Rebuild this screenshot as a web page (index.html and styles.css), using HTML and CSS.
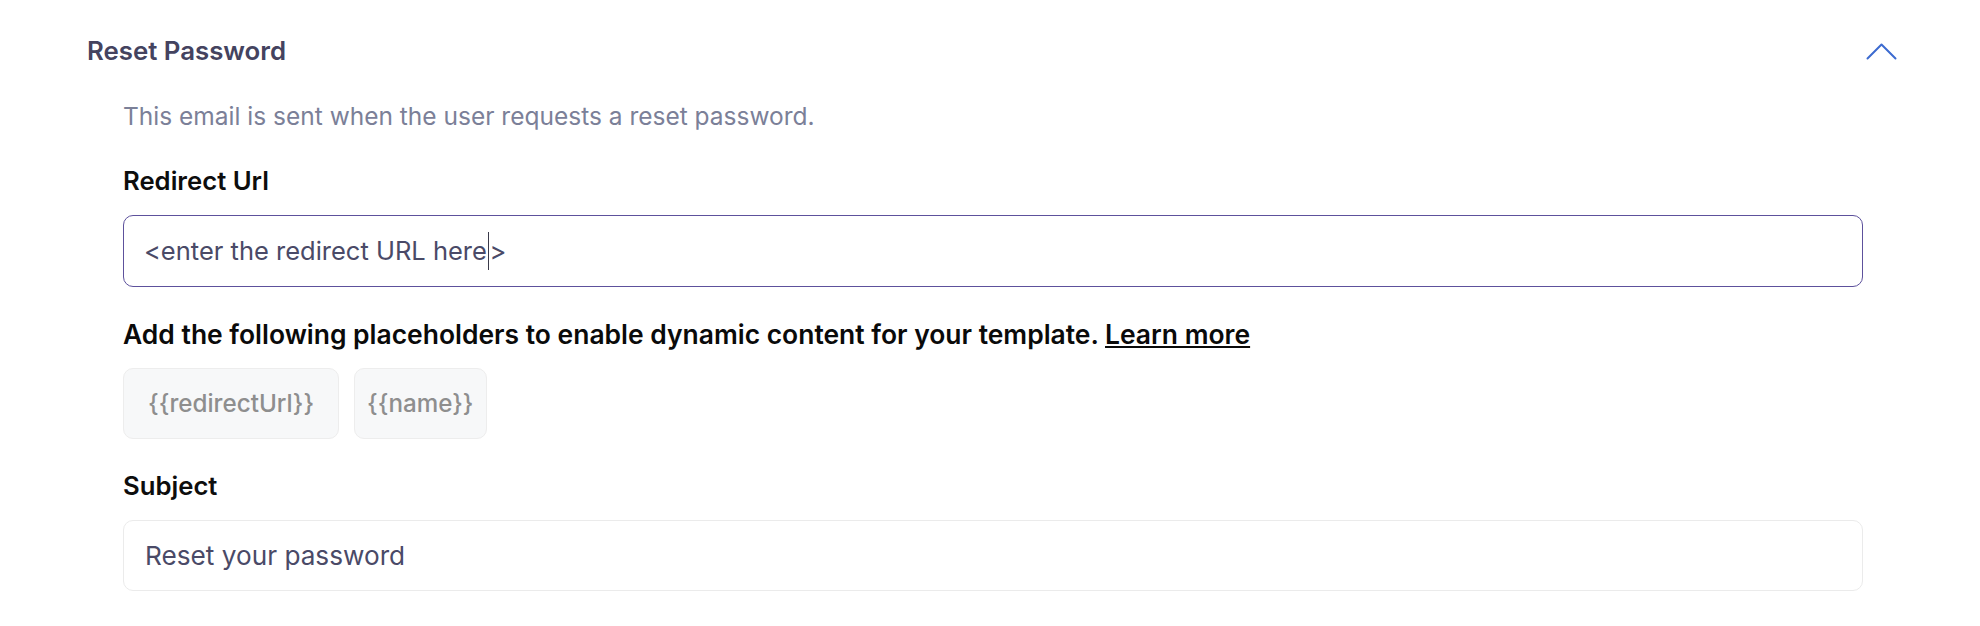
FILE: index.html
```html
<!DOCTYPE html>
<html lang="en">
<head>
<meta charset="utf-8">
<title>Reset Password</title>
<link rel="stylesheet" href="styles.css">
</head>
<body>
<section class="panel">
  <div class="panel-header">
    <h2 class="panel-title">Reset Password</h2>
    <svg class="chevron" width="31" height="17" viewBox="0 0 31 17" aria-hidden="true">
      <polyline points="1.5,15.5 15.5,1.5 29.5,15.5" fill="none" stroke="#3d6bd0" stroke-width="2" stroke-linecap="round" stroke-linejoin="round"/>
    </svg>
  </div>
  <div class="panel-body">
    <p class="desc">This email is sent when the user requests a reset password.</p>

    <div class="field">
      <div class="label">Redirect Url</div>
      <div class="input input-focused">&lt;enter the redirect URL here<span class="caret"></span>&gt;</div>
    </div>

    <div class="field">
      <div class="hint">Add the following placeholders to enable dynamic content for your template. <a class="link" href="#">Learn more</a></div>
      <div class="chips">
        <span class="chip chip-wide">{{redirectUrl}}</span>
        <span class="chip">{{name}}</span>
      </div>
    </div>

    <div class="field">
      <div class="label">Subject</div>
      <div class="input">Reset your password</div>
    </div>
  </div>
</section>
</body>
</html>
```
FILE: styles.css
```css
* { box-sizing: border-box; }

html, body {
  margin: 0;
  padding: 0;
  background: #ffffff;
}

body {
  font-family: "Inter", "Noto Sans", sans-serif;
  color: #111111;
}

.panel {
  padding: 33px 84px 0 87px;
}

.panel-header {
  display: flex;
  align-items: center;
  justify-content: space-between;
  height: 36px;
}

.panel-title {
  margin: 0;
  font-size: 25.8px;
  font-weight: 600;
  line-height: 36px;
  color: #44435f;
}

.chevron {
  display: block;
  margin-right: -1px;
  margin-top: 1px;
}

.panel-body {
  padding: 29px 33px 0 36px;
  display: flex;
  flex-direction: column;
}

.desc {
  margin: 0;
  font-size: 24.5px;
  line-height: 36px;
  color: #7b8098;
}

.field {
  margin-top: 29px;
  display: flex;
  flex-direction: column;
  gap: 16px;
}

.label {
  font-size: 25.7px;
  font-weight: 600;
  line-height: 36px;
  color: #0d0d0d;
}

.input {
  height: 71px;
  display: flex;
  align-items: center;
  padding: 0 21px;
  border: 1px solid #ebebeb;
  border-radius: 10px;
  font-size: 26.2px;
  line-height: 36px;
  color: #4a4a67;
  background: #ffffff;
}

.input-focused {
  height: 72px;
  padding: 0 20px;
  border: 1.5px solid #5d519c;
  font-size: 25.5px;
}

.caret {
  display: inline-block;
  width: 1.5px;
  height: 38px;
  background: #3a3a4a;
  margin: 0 0 0 1px;
  align-self: center;
}

.hint {
  font-size: 26.45px;
  font-weight: 600;
  line-height: 36px;
  color: #0a0a0a;
}

.link {
  color: inherit;
  text-decoration: underline;
  text-decoration-thickness: 2px;
  text-underline-offset: 2px;
}

.chips {
  display: flex;
  gap: 15px;
}

.chip {
  height: 71px;
  display: flex;
  align-items: center;
  padding: 0 12px;
  border: 1px solid #ededed;
  border-radius: 10px;
  background: #f7f8f9;
  font-size: 24.2px;
  font-weight: 500;
  line-height: 36px;
  color: #8e8e8e;
}

.chip-wide {
  padding: 0 24px;
}
```
